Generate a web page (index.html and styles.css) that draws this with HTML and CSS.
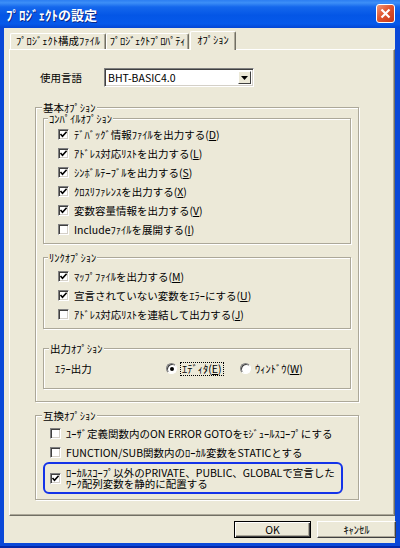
FILE: index.html
```html
<!DOCTYPE html>
<html lang="ja">
<head>
  <meta charset="UTF-8">
  <title>ﾌﾟﾛｼﾞｪｸﾄの設定</title>
  <link rel="stylesheet" href="styles.css">
</head>
<body>
  <div class="window">
    <div class="titlebar">
      <span class="title">ﾌﾟﾛｼﾞｪｸﾄの設定</span>
      <span class="close">
        <svg width="11" height="11" viewBox="0 0 11 11"><path d="M1.5 1.5 L9.5 9.5 M9.5 1.5 L1.5 9.5" stroke="#fff" stroke-width="2.2" fill="none"/></svg>
      </span>
    </div>

    <div class="client">
      <div class="tabs">
        <div class="tab tab-files">ﾌﾟﾛｼﾞｪｸﾄ構成ﾌｧｲﾙ</div>
        <div class="tab tab-props">ﾌﾟﾛｼﾞｪｸﾄﾌﾟﾛﾊﾟﾃｨ</div>
        <div class="tab tab-options active">ｵﾌﾟｼｮﾝ</div>
      </div>

      <div class="panel">
        <div class="lang-row">
          <span class="lang-label">使用言語</span>
          <div class="combo">
            <span class="combo-text">BHT-BASIC4.0</span>
            <span class="combo-btn"><svg width="7" height="4" viewBox="0 0 7 4"><path d="M0 0 H7 L3.5 4 Z" fill="#000"/></svg></span>
          </div>
        </div>

        <div class="group group-basic">
          <span class="legend">基本ｵﾌﾟｼｮﾝ</span>

          <div class="group group-compile">
            <span class="legend">ｺﾝﾊﾟｲﾙｵﾌﾟｼｮﾝ</span>
            <div class="row"><span class="cb checked"></span>ﾃﾞﾊﾞｯｸﾞ情報ﾌｧｲﾙを出力する(<u>D</u>)</div>
            <div class="row"><span class="cb checked"></span>ｱﾄﾞﾚｽ対応ﾘｽﾄを出力する(<u>L</u>)</div>
            <div class="row"><span class="cb checked"></span>ｼﾝﾎﾞﾙﾃｰﾌﾞﾙを出力する(<u>S</u>)</div>
            <div class="row"><span class="cb checked"></span>ｸﾛｽﾘﾌｧﾚﾝｽを出力する(<u>X</u>)</div>
            <div class="row"><span class="cb checked"></span>変数容量情報を出力する(<u>V</u>)</div>
            <div class="row"><span class="cb"></span>Includeﾌｧｲﾙを展開する(<u>I</u>)</div>
          </div>

          <div class="group group-link">
            <span class="legend">ﾘﾝｸｵﾌﾟｼｮﾝ</span>
            <div class="row"><span class="cb checked"></span>ﾏｯﾌﾟﾌｧｲﾙを出力する(<u>M</u>)</div>
            <div class="row"><span class="cb checked"></span>宣言されていない変数をｴﾗｰにする(<u>U</u>)</div>
            <div class="row"><span class="cb"></span>ｱﾄﾞﾚｽ対応ﾘｽﾄを連結して出力する(<u>J</u>)</div>
          </div>

          <div class="group group-output">
            <span class="legend">出力ｵﾌﾟｼｮﾝ</span>
            <div class="row">
              <span class="out-label">ｴﾗｰ出力</span>
              <span class="radio-opt opt-editor"><span class="radio on"></span><span class="focus">ｴﾃﾞｨﾀ(<u>E</u>)</span></span>
              <span class="radio-opt"><span class="radio"></span>ｳｨﾝﾄﾞｳ(<u>W</u>)</span>
            </div>
          </div>
        </div>

        <div class="group group-compat">
          <span class="legend">互換ｵﾌﾟｼｮﾝ</span>
          <div class="row"><span class="cb"></span>ﾕｰｻﾞ定義関数内のON ERROR GOTOをﾓｼﾞｭｰﾙｽｺｰﾌﾟにする</div>
          <div class="row"><span class="cb"></span>FUNCTION/SUB関数内のﾛｰｶﾙ変数をSTATICとする</div>
          <div class="row highlight"><span class="cb checked"></span><span class="two-line">ﾛｰｶﾙｽｺｰﾌﾟ以外のPRIVATE、PUBLIC、GLOBALで宣言した<br>ﾜｰｸ配列変数を静的に配置する</span></div>
        </div>
      </div>

      <div class="buttons">
        <button class="btn btn-ok">OK</button>
        <button class="btn btn-cancel">ｷｬﾝｾﾙ</button>
      </div>
    </div>
  </div>
</body>
</html>
```

FILE: styles.css
```css
body {
  margin: 0;
  font-family: "Noto Sans CJK JP", "Noto Sans", sans-serif;
  font-size: 10.5px;
  color: #000;
}
.window {
  width: 400px;
  height: 548px;
  background: #0a48d8;
  border-bottom: 2px solid #0427a8;
  box-sizing: border-box;
  display: flex;
  flex-direction: column;
}
.titlebar {
  height: 28px;
  flex: none;
  display: flex;
  align-items: center;
  justify-content: space-between;
  padding: 0 5px 0 6px;
  background: linear-gradient(#2c7ef2 0%, #3d8ff7 10%, #1467ec 25%, #0456e6 55%, #0659ea 85%, #0446d4 100%);
}
.title {
  color: #fff;
  font-weight: bold;
  font-size: 13px;
  text-shadow: 1px 1px 0 #0b2a8a;
}
.close {
  width: 17px;
  height: 17px;
  margin-top: -1px;
  border: 1px solid #fff;
  border-radius: 3px;
  background: linear-gradient(135deg, #f0977a 0%, #e0552f 45%, #c5381a 100%);
  display: flex;
  align-items: center;
  justify-content: center;
}
.client {
  flex: 1;
  margin: 0 5px 3px 4px;
  background: #ece9d8;
  display: flex;
  flex-direction: column;
  padding: 3px 0 0 5px;
}

/* tabs */
.tabs {
  height: 18px;
  display: flex;
  align-items: flex-end;
  padding-left: 1px;
}
.tab {
  height: 16px;
  box-sizing: border-box;
  border-top: 1px solid #fff;
  border-left: 1px solid #fff;
  border-right: 1px solid #716f64;
  box-shadow: inset -1px 0 0 #aca899;
  border-radius: 2px 2px 0 0;
  text-align: center;
  line-height: 14px;
  white-space: nowrap;
}
.tab-files { width: 96px; }
.tab-props { width: 83px; letter-spacing: -0.3px; }
.tab.active {
  width: 46px;
  height: 19px;
  margin-left: 1px;
  margin-bottom: -1px;
  padding-bottom: 3px;
  line-height: 15px;
  background: #ece9d8;
  position: relative;
  z-index: 1;
}

/* panel */
.panel {
  flex: 1;
  border-top: 1px solid #fff;
  border-left: 1px solid #fff;
  border-right: 1px solid #716f64;
  border-bottom: 1px solid #716f64;
  box-shadow: inset -1px -1px 0 #aca899;
  padding: 18px 35px 0 25px;
}
.lang-row {
  display: flex;
  align-items: center;
  height: 19px;
  padding-left: 5px;
}
.lang-label {
  width: 64px;
}
.combo {
  width: 150px;
  height: 19px;
  box-sizing: border-box;
  background: #fff;
  border: 1px solid;
  border-color: #808080 #fff #fff #808080;
  box-shadow: inset 1px 1px 0 #404040, inset -1px -1px 0 #d4d0c8;
  display: flex;
  align-items: center;
  justify-content: space-between;
  padding: 1px 2px 1px 3px;
}
.combo-btn {
  width: 13px;
  height: 13px;
  box-sizing: border-box;
  background: #ece9d8;
  border: 1px solid;
  border-color: #fff #404040 #404040 #fff;
  display: flex;
  align-items: center;
  justify-content: center;
}

/* group boxes */
.group {
  position: relative;
  border: 1px solid #aca899;
  box-shadow: 1px 1px 0 #fff, inset 1px 1px 0 #fff;
}
.legend {
  position: absolute;
  top: -6px;
  left: 4px;
  line-height: 11px;
  padding: 0 1px;
  background: #ece9d8;
  white-space: nowrap;
}
.group-basic {
  margin-top: 20px;
  padding: 10px 7px 12px 7px;
}
.group-basic > .legend { left: 6px; }
.group-compile {
  padding: 6px 0 4px 14px;
}
.group-link {
  margin-top: 13px;
  padding: 9px 0 4px 14px;
}
.group-output {
  margin-top: 19px;
  padding: 10px 0 10px 11px;
}
.group-output > .legend { left: 5px; }
.group-compat {
  margin-top: 13px;
  padding: 8px 0 5px 14px;
}
.group-compat > .legend { left: 6px; }

.row {
  height: 19px;
  display: flex;
  align-items: center;
  white-space: nowrap;
}
.cb {
  width: 11px;
  height: 11px;
  flex: none;
  box-sizing: border-box;
  margin-right: 5px;
  background: #fff;
  border: 1px solid;
  border-color: #808080 #fff #fff #808080;
  box-shadow: inset 1px 1px 0 #404040, inset -1px -1px 0 #d4d0c8;
}
.cb.checked {
  background: #fff url("data:image/svg+xml,%3Csvg xmlns='http://www.w3.org/2000/svg' width='9' height='9' viewBox='0 0 9 9'%3E%3Cpath d='M1.5 4 L3.5 6.3 L7.6 1.8' stroke='%23000' stroke-width='1.6' fill='none'/%3E%3C/svg%3E") center / 9px 9px no-repeat;
}
.out-label {
  width: 111px;
}
.radio-opt {
  display: flex;
  align-items: center;
}
.opt-editor {
  width: 74px;
}
.radio {
  width: 11px;
  height: 11px;
  box-sizing: border-box;
  border-radius: 50%;
  background: #fff;
  border: 1px solid;
  border-color: #808080 #fff #fff #808080;
  box-shadow: inset 1px 1px 0 #404040;
  margin-right: 4px;
  display: flex;
  align-items: center;
  justify-content: center;
}
.radio.on::after {
  content: "";
  width: 4px;
  height: 4px;
  border-radius: 50%;
  background: #000;
}
.focus {
  outline: 1px dotted #000;
  padding: 0 1px;
  line-height: 12px;
}

.row.highlight {
  width: 300px;
  height: 32px;
  box-sizing: border-box;
  margin-left: -7px;
  padding-left: 5px;
  border: 2px solid #1433e8;
  border-radius: 6px;
}
.two-line {
  line-height: 11px;
}

/* buttons */
.buttons {
  height: 27px;
  flex: none;
  display: flex;
  justify-content: flex-end;
  gap: 6px;
  padding-top: 5px;
  box-sizing: border-box;
  margin-right: -1px;
}
.btn {
  height: 17px;
  padding: 0;
  font-family: inherit;
  font-size: 10.5px;
  line-height: 13px;
  background: #ece9d8;
  border: 1px solid;
  border-color: #fff #404040 #404040 #fff;
  box-shadow: inset -1px -1px 0 #aca899;
}
.btn-ok {
  width: 77px;
  border-color: #000;
  box-shadow: inset 1px 1px 0 #fff, inset -1px -1px 0 #404040, inset -2px -2px 0 #aca899;
}
.btn-cancel {
  width: 79px;
}
```
